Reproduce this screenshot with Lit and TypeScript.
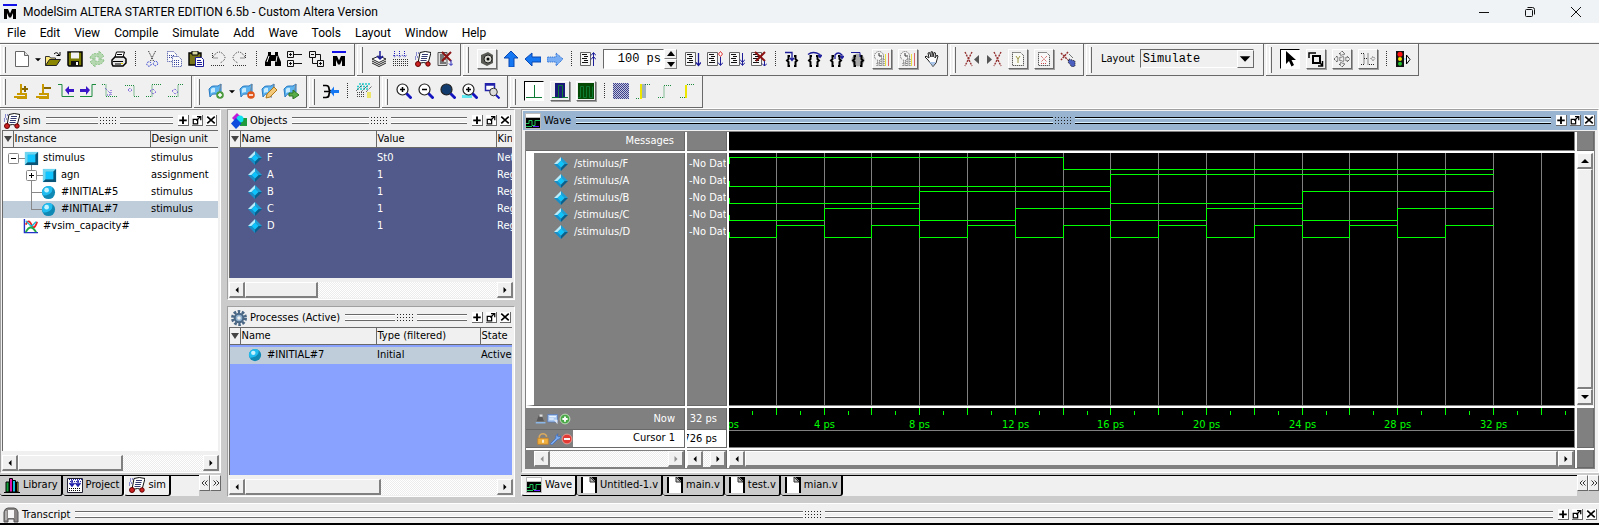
import { LitElement, html, svg, css, nothing } from "lit";
import { customElement, property } from "lit/decorators.js";
import { classMap } from "lit/directives/class-map.js";

/* ---------- icon artwork, drawn on a 16 x 16 grid ---------- */

const cube = svg`<path d="M1 1h14v14H1z" fill="#1f9cc6"/><path d="M1 1h14l-3 3H4v8l-3 3z" fill="#6fd6f2"/><path d="M15 1v14H1l3-3h8V4z" fill="#0a5478"/><path d="M4 4h8v8H4z" fill="#0fc4ff"/>`;
const diamond = svg`<path d="M8 0L0 8h4l4-4z" fill="#b6ecfb"/><path d="M8 0l8 8h-4L8 4z" fill="#1d9fd6"/><path d="M0 8l8 8v-4L4 8z" fill="#168fc9"/><path d="M16 8l-8 8v-4l4-4z" fill="#06618f"/><path d="M8 4l4 4-4 4-4-4z" fill="#0cc4fb"/>`;
const sphere = svg`<circle cx="8" cy="8" r="7" fill="#1089b4"/><path d="M1 8a7 7 0 0 1 11-5.500q1 5-3 7T2 11z" fill="#22bdf0"/><circle cx="6" cy="5.500" r="2.500" fill="#c4f3ff"/>`;
const flag = svg`<path d="M1 6q3-4 6-3t6-2v8q-3 3-6 2t-5 3z" fill="#5cb5f0" stroke="#2878c0"/><path d="M3 6q2-2 4-1v4q-2 0-4 1z" fill="#c8ecff"/><path d="M13 1l-3 14" stroke="#7a8794"/>`;
const lens = (fill: string) => svg`<circle cx="6.500" cy="6.500" r="5.500" fill="${fill}" stroke="#222" stroke-width="1.200"/><path d="M10.500 10.500l5 5" stroke="#1515c0" stroke-width="2.800"/>`;
const lines = svg`<path d="M.5 1.500h10v13H.5z" fill="#f6f6f6" stroke="#666"/><path d="M2 3.500h5M4 5.500h4M2 7.500h5M4 9.500h4M2 11.500h6" stroke="#111" stroke-width="1.200"/>`;
const braces = svg`<path d="M6 5H4.500v3L3 9.500 4.500 11v4H6M10 5h1.500v3L13 9.500 11.500 11v4H10" fill="none" stroke="#000" stroke-width="2"/>`;
const simBook = svg`<path d="M5 1.500q5-2 11 0l-3 11q-4-2-10 0z" fill="#fff" stroke="#111"/><path d="M7 3.500h6M6.500 5.500h6M6 7.500h6M5.500 9.500h6" stroke="#333a70"/><path d="M1 2h3M1 4h2M0 6h3M0 8h2" stroke="#22a" stroke-dasharray="1 1"/><circle cx="3" cy="13" r="2.500" fill="#c22" stroke="#600"/><circle cx="13" cy="13" r="2.200" fill="#c22" stroke="#600"/>`;

const art: Record<string, unknown> = {
  cube, diamond, sphere,
  mlogo: svg`<path d="M1 0h14v2H1z" fill="#1212e8"/><path d="M2 5h4l2 4.500L10 5h4v10h-3V9l-2 4.500H7L5 9v6H2z" fill="#000"/>`,
  page: svg`<path d="M1.500.5h9l4 4v11h-13z" fill="#fff" stroke="#666"/><path d="M10.500.5v4h4" fill="#ddd" stroke="#666"/>`,
  drop: svg`<path d="M4 7h8l-4 4z"/>`,
  open: svg`<path d="M.5 14.500v-9h4l1 1.500h5v2" fill="#ffe97a" stroke="#333"/><path d="M.5 14.500l4-6h11l-4 6z" fill="#8b8700" stroke="#222"/><path d="M9 3q3-3 5 1M15 1v3.500h-3.500" fill="none" stroke="#000"/>`,
  save: svg`<path d="M1 1h14v14H2l-1-1z" fill="#7b7b00" stroke="#000" stroke-width="1.500"/><path d="M4 1.500h8v6H4z" fill="#f2f2f2"/><path d="M4 10h8v5H4z" fill="#111"/><path d="M9 11h2v3H9z" fill="#fff"/>`,
  refresh: svg`<path d="M1 7q2-6 9-4V0l5 5-5 4V6Q5 5 4 8zM15 9q-2 6-9 4v3l-5-5 5-4v3q5 1 6-2z" fill="#b5d8b0" stroke="#8cc287" stroke-dasharray="2 1"/>`,
  print: svg`<path d="M4 6l1.500-5h8L12 6" fill="#fff" stroke="#000"/><path d="M1 9l3-3h9l2 2v4l-3 3H2l-1-2z" fill="#e6e6e6" stroke="#000" stroke-width="1.500"/><path d="M6 3.500h5M2 10.500h10M4 13h6" stroke="#000"/><path d="M10 12h2v1h-2z" fill="#e8d800"/>`,
  cut: svg`<g fill="none" stroke-dasharray="1.500 1"><path d="M4.500 0l5 10M11.500 0l-5 10" stroke="#333"/><circle cx="5" cy="13" r="2.200" stroke="#23c"/><circle cx="11.500" cy="12.500" r="2.200" stroke="#23c"/></g>`,
  copy: svg`<g fill="#fafafa" stroke="#33409c" stroke-dasharray="1 1"><path d="M1.500.5h6l3 3v7h-9z"/><path d="M6.500 5.500h6l3 3v7h-9z"/><path d="M3 4.500h5M3 6.500h3M8 9.500h5M8 11.500h6M8 13.500h6"/></g>`,
  paste: svg`<path d="M1 2h12v12H1z" fill="#77741a" stroke="#000" stroke-width="1.400"/><path d="M4 0h6v4H4z" fill="#d8d8a0" stroke="#000"/><path d="M7.500 6.500h6l2 2v7h-8z" fill="#fff" stroke="#1d1d9a"/><path d="M9 9.500h4M9 11.500h5M9 13.500h5" stroke="#1d1d9a"/>`,
  undo: svg`<g fill="none" stroke="#333" stroke-dasharray="1 1"><path d="M3 6q5-8 10-3t-3 9M2.500 2v5H8"/><path d="M1 14.500h14"/></g>`,
  redo: svg`<g fill="none" stroke="#333" stroke-dasharray="1 1"><path d="M13 6Q8-2 3 3t3 9M13.500 2v5H8"/><path d="M1 14.500h14"/></g>`,
  find: svg`<path d="M3 1h3v3h4V1h3v3l3 7v4h-6v-5H6v5H0v-4l3-7z"/><path d="M4 5L2 11M12 5l-1 6" stroke="#fff"/>`,
  treeA: svg`<g fill="none" stroke="#111"><path d="M.5.5h6v6h-6zM.5 9.500h6v6h-6zM2 3.500h3M3.500 2v3M2 12.500h3M3.500 11v3M7 3.500h8M7 12.500h8"/></g>`,
  treeB: svg`<g fill="none" stroke="#111"><path d="M.5.5h6v6h-6zM8.500 9.500h6v6h-6zM2 3.500h3M10 12.500h3M11.500 11v3M7 3.500h4.500v6M3.500 7v5.500h5"/></g>`,
  stack: svg`<path d="M1 12l7 3.500 7-3.500M1 10l7 3.500 7-3.500" fill="none" stroke="#222"/><path d="M1 8l7-3 7 3-7 3.500z" fill="#fff" stroke="#222"/><path d="M9 0v7M6 5l3 3 3-3" fill="none" stroke="#1d1d9a" stroke-width="1.500"/>`,
  compileAll: svg`<path d="M1.500 0v6M6.500 0v6M11.500 0v6M0 4l1.500 2L4 4l2.500 2L9 4l2.500 2L14 4" fill="none" stroke="#22b" stroke-dasharray="1 1"/><path d="M0 8.500h16M0 10.500h16M0 12.500h16M0 14.500h16" stroke="#333" stroke-dasharray="1 1"/>`,
  sim: simBook,
  endSim: svg`<path d="M1 1.500h9v13H1z" fill="#ddd" stroke="#555"/><path d="M3 4h6M3 6h4M3 8h6M3 10h4M3 12h6" stroke="#111"/><path d="M5 1l9 9M14 1l-9 9" stroke="#8c1414" stroke-width="2"/><path d="M14 9v5M12 12.500l2 2 2-2" fill="none" stroke="#22b"/>`,
  camera: svg`<path d="M2 4l7-3 5 3v8l-6 3-6-3z" fill="#5b5b55"/><circle cx="9" cy="8" r="4" fill="#d9d9d2" stroke="#222"/><circle cx="9" cy="8" r="1.500"/>`,
  up: svg`<path d="M8 0l7 7h-4v9H6V7H1z" fill="#1577f2" stroke="#0a48b4"/>`,
  left: svg`<path d="M0 8l7-6v4h9v5H7v4z" fill="#1577f2" stroke="#0a48b4"/>`,
  right: svg`<path d="M16 8L9 2v4H0v5h9v4z" fill="#79aef5" stroke="#1b60c8" stroke-dasharray="1 1"/>`,
  restart: svg`${lines}<path d="M13.500 15V2M11 4.500l2.500-3L16 4.500M11 8.500l2.500-3L16 8.500" fill="none" stroke="#1d1d9a"/>`,
  run: svg`${lines}<path d="M13.500 2v12M11 11.500l2.500 3 2.500-3" fill="none" stroke="#1d1d9a" stroke-width="1.300"/>`,
  runCont: svg`${lines}<path d="M13.500 6v8M11 11.500l2.500 3 2.500-3" fill="none" stroke="#1d1d9a"/><path d="M13.500.5L15.500 3l-2 2.500-2-2.500z" fill="#fff" stroke="#d33"/>`,
  runAll: svg`${lines}<path d="M13.500 2v12M11 8.500l2.500 3 2.500-3M11 11.500l2.500 3 2.500-3" fill="none" stroke="#1d1d9a"/>`,
  stop: svg`${lines}<path d="M4 1l10 9M14 1L5 10" stroke="#8c1414" stroke-width="2"/><path d="M13.500 10v5M11 12.500l2.500 2.500 2.500-2.500" fill="none" stroke="#1d1d9a"/>`,
  stepIn: svg`${braces}<path d="M1 1.500h7V9M6 7l2 2.500L10 7" fill="none" stroke="#1d1d9a" stroke-width="1.300"/>`,
  stepOver: svg`${braces}<path d="M2 3.500q5-4 12 0V6M12 4l2 2.500L16 4" fill="none" stroke="#1d1d9a" stroke-width="1.300"/>`,
  stepOut: svg`${braces}<path d="M7 8V4q3-4 7 0v3M12 5l2 2.500L16 5" fill="none" stroke="#1d1d9a" stroke-width="1.300"/>`,
  stepGear: svg`<circle cx="8" cy="9" r="6.500" fill="#a9a9a9"/>${braces}<path d="M1 1.500h9V6" fill="none" stroke="#1d1d9a"/>`,
  profile: svg`<circle cx="5" cy="5" r="4.500" fill="#f5f5f5" stroke="#555" stroke-dasharray="1 1"/><path d="M5 2v3h3" fill="none" stroke="#333"/><path d="M3 15v-4h3v4M7 15V7h3v8" fill="#c8c8c8" stroke="#666" stroke-dasharray="1 1"/><path d="M11 15V3h1v12z" fill="#e8de40"/><path d="M14 15V2h1v13z" fill="#d66"/>`,
  hand: svg`<path d="M4 9L1 6l1-1 3 2-1-5 1.500-.5L7 6V.8h1.500L9 6l1-4.500 1.500.5L11 7l2-3 1 1-2 7-3 3.500z" fill="#fff" stroke="#222"/><path d="M5 11l4 4 3-4z" fill="#a8c4e8"/>`,
  xleft: svg`<path d="M1 1l7 14M8 1L1 15" stroke="#943030" stroke-width="1.400" stroke-dasharray="2 1"/><path d="M15 4v9l-5-4.500z" fill="#555"/>`,
  xright: svg`<path d="M8 1l7 14M15 1L8 15" stroke="#943030" stroke-width="1.400" stroke-dasharray="2 1"/><path d="M1 4v9l5-4.500z" fill="#555"/>`,
  pageA: svg`<path d="M2.500 1.500h8l3 3v10h-11z" fill="#f8f8f4" stroke="#222" stroke-dasharray="1 1"/><path d="M6 5l2 3 2-3M8 8v4" fill="none" stroke="#9a9440"/>`,
  pageB: svg`<path d="M2.500 1.500h8l3 3v10h-11z" fill="#f8f8f8" stroke="#222" stroke-dasharray="1 1"/><path d="M5 5l6 6M11 5l-6 6M5 12.500h6" stroke="#c44" stroke-dasharray="1 1"/>`,
  xpen: svg`<path d="M1 2l7 7M8 1L1 9" stroke="#943030" stroke-width="1.500" stroke-dasharray="2 1"/><path d="M9 3l4 4" stroke="#777"/><path d="M9 8l6 2v5l-3 1-4-5z" fill="#4b5fc0" stroke="#222" stroke-dasharray="1 1"/>`,
  select: svg`<path d="M4 0v13l3-3 2.500 5.500 2.500-1.500-2.500-5H14z"/>`,
  zoomMode: svg`<path d="M5 5h7v7H5z" fill="none" stroke="#000" stroke-width="2"/><path d="M1 7V2h7M10 15h4.500v-5M11 11l4 4" fill="none" stroke="#000" stroke-width="1.500"/>`,
  pan: svg`<path d="M8 0l3 3H9v4h4V5l3 3-3 3V9H9v4h2l-3 3-3-3h2V9H3v2L0 8l3-3v2h4V3H5z" fill="#eee" stroke="#222" stroke-dasharray="1 1"/>`,
  twoC: svg`<path d="M1 2.500h3v11H1M8 2.500v11h6M4 7.500h3M11 7.500l2-2 2 2-2 2z" fill="none" stroke="#222" stroke-dasharray="1 1"/>`,
  traffic: svg`<path d="M1 0h8v16H1z" fill="#111"/><circle cx="5" cy="3.300" r="2.500" fill="#f11"/><circle cx="5" cy="8" r="2" fill="#f3e500"/><circle cx="5" cy="12.700" r="2" fill="#1fbf2f"/><path d="M11.500 4v9l3.500-4.500z" fill="#fff" stroke="#000"/><path d="M9 8h2" stroke="#6cf"/>`,
  curAdd: svg`<path d="M7 1v10M3 11h9v3H1v-1M3 15h10" fill="none" stroke="#c99a00" stroke-width="2"/><path d="M8 6h6M11 3v6" stroke="#8a6a00" stroke-width="2"/>`,
  curDel: svg`<path d="M7 1v10M3 11h9v3H1v-1M3 15h10" fill="none" stroke="#c99a00" stroke-width="2"/><path d="M8 5h7" stroke="#8a6a00" stroke-width="2"/>`,
  prevEdge: svg`<path d="M0 1.500h4v12h12" fill="none" stroke="#1b8a3c"/><path d="M7 7l4-4v3h5v3h-5v3z" fill="#3a16c8"/>`,
  nextEdge: svg`<path d="M0 13.500h12v-12h4" fill="none" stroke="#1b8a3c"/><path d="M10 7L6 3v3H0v3h6v3z" fill="#3a16c8"/>`,
  edgeA: svg`<path d="M0 1.500h4v12h12" fill="none" stroke="#1b8a3c" stroke-dasharray="1 1"/><path d="M3 5l6 6M9 7v5H5" fill="none" stroke="#5a3ad0" stroke-dasharray="1 1"/>`,
  edgeB: svg`<path d="M1 2.500h9v11h6" fill="none" stroke="#1b8a3c" stroke-dasharray="1 1"/><path d="M4 7l2-2 2 2-2 2z" fill="none" stroke="#5a3ad0" stroke-dasharray="1 1"/>`,
  edgeC: svg`<path d="M0 13.500h6v-12h9" fill="none" stroke="#1b8a3c" stroke-dasharray="1 1"/><path d="M4 8l3-2 3 3-3 2z" fill="none" stroke="#5a3ad0" stroke-dasharray="1 1"/>`,
  edgeD: svg`<path d="M0 13.500h10v-12h5" fill="none" stroke="#1b8a3c" stroke-dasharray="1 1"/><path d="M4 8l3-2 3 3-3 2z" fill="none" stroke="#5a3ad0" stroke-dasharray="1 1"/>`,
  flagAdd: svg`${flag}<circle cx="12" cy="12" r="3.800" fill="#4c9a3e"/><path d="M10 12h4M12 10v4" stroke="#fff" stroke-width="1.500"/>`,
  flagDel: svg`${flag}<circle cx="12" cy="12" r="3.800" fill="#e0561a"/><path d="M10 12h4" stroke="#fff" stroke-width="1.500"/>`,
  flagEdit: svg`${flag}<path d="M5 15l1-4 7-7 3 3-7 7z" fill="#f3c878" stroke="#b07818"/>`,
  flagGo: svg`${flag}<path d="M6 10h4V7l6 5-6 4v-3H6z" fill="#58ad48" stroke="#2e7524"/>`,
  merge: svg`<path d="M0 2.500h3q3 0 3 3t3 3q-3 0-3 3t-3 3H0M1 8.500h6" fill="none" stroke="#000" stroke-width="1.700"/><path d="M7 8.500l4-5v3.500h5v3h-5v3.500z" fill="#1577f2"/>`,
  layers: svg`<path d="M3 1h12M1 3.500h12M1 6h12" stroke="#2cc" stroke-width="1.500" stroke-dasharray="2 1"/><path d="M0 8L7 1M5 9l7-7M10 9l6-6" fill="none" stroke="#333" stroke-dasharray="1 1"/><path d="M1 9.500h7M1 11.500h7M1 13.500h7" stroke="#444" stroke-dasharray="1 1"/><path d="M11 9h4v6h-4z" fill="#ece66a"/>`,
  zoomIn: svg`${lens("#fff")}<path d="M4 6.500h5M6.500 4v5" stroke="#000" stroke-width="1.500"/>`,
  zoomOut: svg`${lens("#fff")}<path d="M4 6.500h5" stroke="#000" stroke-width="1.500"/>`,
  zoomFull: lens("#123c6e"),
  zoomCur: svg`<path d="M0 12h10v3H0z" fill="#5fe6ee"/>${lens("#fff")}<path d="M4 6.500h5M6.500 4v5" stroke="#000" stroke-width="1.500"/>`,
  zoomSel: svg`<path d="M1.500.5h9v7h-9zM1 2h10" fill="#fff" stroke="#22a" stroke-width="1.500"/><circle cx="9.500" cy="9" r="3.800" fill="#ddd" stroke="#333"/><path d="M12 12l3.500 3.500" stroke="#1515c0" stroke-width="2"/>`,
  spike: svg`<path d="M0 14.500h17M8.500 2v12" fill="none" stroke="#0d7a33"/>`,
  pulse: svg`<path d="M3 0h10v15H3z" fill="#1a1a78"/><path d="M0 14.500h6.500V2.500h4v12H16" fill="none" stroke="#0d7a33"/>`,
  pulses: svg`<path d="M0 0h16v16H0z" fill="#044a04"/><path d="M0 14.500h2.500v-11h3v11h3v-11h3v11h3v-11" fill="none" stroke="#0d7a33"/>`,
  patA: svg`<path d="M0 0h16v16H0z" fill="#c3c5dc"/><g stroke="#3b3f8c" stroke-dasharray="1 1">${[0, 1, 2, 3, 4, 5, 6, 7, 8, 9, 10, 11, 12, 13, 14, 15].map(y => svg`<path d="M${y % 2} ${y + 0.5}h16"/>`)}</g>`,
  patB: svg`<path d="M1 15.500h4M10 1.500h5" stroke="#1b8a3c" stroke-dasharray="1 1"/><path d="M5 1h2v15H5z" fill="#ece600"/><path d="M8 1.500v14M10 1.500v14" stroke="#1d4a6a" stroke-width="1.500" stroke-dasharray="1 1"/>`,
  patC: svg`<path d="M1 14.500h6v-12h8" fill="none" stroke="#1b8a3c" stroke-dasharray="1 1"/>`,
  patD: svg`<path d="M1 14.500h6M8 1.500h7" stroke="#1b8a3c" stroke-dasharray="1 1"/><path d="M7 2v13" stroke="#ece600" stroke-width="2"/>`,
  objects: svg`<path d="M6 0l5 5-5 5-5-5z" fill="#c01ad8"/><path d="M9 5h7v8H9z" fill="#1f9a3c"/><circle cx="9" cy="6" r="3.500" fill="#0fe0f0"/><path d="M5 5l5.500 5.500L5 16l-5-5.500z" fill="#0c4bdc"/>`,
  gear: svg`<circle cx="8" cy="8" r="6.500" fill="none" stroke="#4a6785" stroke-width="3" stroke-dasharray="2.500 1.580"/><circle cx="8" cy="8" r="4.300" fill="#8fb0cf" stroke="#4a6785" stroke-width="2"/><circle cx="8" cy="8" r="1.800" fill="#f0f0f0"/>`,
  wave: svg`<path d="M0 0h16v16H0z" fill="#bbb"/><path d="M1 1h14v3H1z" fill="#fff"/><path d="M1 5h14v10H1z" fill="#000"/><path d="M1 10.500h3v-3h3v5h3v-5h5M1 13.500h6" fill="none" stroke="#1fc85a"/><path d="M8 13.500h6" stroke="#62f"/>`,
  capacity: svg`<path d="M1.500 0v14.500H16" fill="none" stroke="#23c" stroke-width="1.500"/><path d="M3 6q3-7 6 0t6-3" fill="none" stroke="#e22" stroke-width="2"/><path d="M3 2l6 6 5-5" fill="none" stroke="#1ab8d8" stroke-width="1.500"/><path d="M3 14q5-10 11 0" fill="none" stroke="#2a4" stroke-width="2"/>`,
  library: svg`<path d="M0 15.500h16" stroke="#000"/><path d="M2 5h3v10H2z" fill="#14a03c" stroke="#000"/><path d="M5.500 1.500h3V15h-3z" fill="#e013b0" stroke="#000"/><path d="M8.500 3.500h3V15h-3z" fill="#1bd" stroke="#000"/><path d="M12.500 5h1.500v10h-1.500z" fill="#ec3" stroke="#000"/>`,
  project: svg`<path d="M.5 1.500h15v14H.5z" fill="#fff" stroke="#223"/><path d="M2 2.500h13M3 4.500h12" stroke="#22a" stroke-dasharray="1 1"/><path d="M5 3v5M11 3v5M2.500 6L5 9l2.500-3M8.500 6l2.500 3 2.500-3" fill="none" stroke="#22a" stroke-width="1.500"/><path d="M2 11.500h12M2 13.500h12" stroke="#000" stroke-dasharray="1 1"/>`,
  doc: svg`<path d="M0 0h16v16H0z" fill="#000"/><path d="M2 0h8l4 4v12H2z" fill="#fff"/><path d="M9 0v5h5z" fill="#bbb" stroke="#333"/>`,
  transcript: svg`<path d="M1 15V5q1-4 4-4h6q3 0 4 4v10h-4v-3H5v3z" fill="#8a8585" stroke="#555"/><path d="M5 3h6v8H5z" fill="#f6f6f6"/><path d="M3 4v9" stroke="#d8d8d8"/>`,
  nowA: svg`<path d="M2 11l3-8h4l3 8z" fill="#5a5a5a"/><path d="M6 2h4v3H6z" fill="#ddd"/><path d="M1 13h13" stroke="#8ab6e8" stroke-width="2"/>`,
  nowB: svg`<path d="M1 2h13v10H1z" fill="#a8c8f0" stroke="#5578b8"/><path d="M3 5h9M3 8h6" stroke="#fff" stroke-width="1.500"/><path d="M9 9h5v6z" fill="#dfe8f4"/>`,
  nowC: svg`<circle cx="8" cy="8" r="6.500" fill="#4aa848" stroke="#d8f0d0"/><path d="M4.500 8h7M8 4.500v7" stroke="#fff" stroke-width="2.500"/>`,
  lock: svg`<path d="M3 8V5q1-4 5-4t5 4" fill="none" stroke="#d8a860" stroke-width="2"/><path d="M1 7h14v8H1z" fill="#f0b040" stroke="#c88020"/><path d="M7 9h2v4H7z" fill="#fff"/>`,
  wrench: svg`<path d="M2 14l7-7q-1-4 3-6l-1 3 2 1 3-1q0 4-5 5l-6 6q-2 2-3-1z" fill="#7eaef0" stroke="#3c68b8"/>`,
  minusRed: svg`<circle cx="8" cy="8" r="6.500" fill="#e23a34" stroke="#f4b0a8"/><path d="M4 8h8" stroke="#fff" stroke-width="2.500"/>`,
  plus: svg`<path d="M2 7h12v3H2zM6.500 2.500h3v12h-3z"/>`,
  undock: svg`<path d="M2 7h7v7H2z" fill="none" stroke="#000" stroke-width="2"/><path d="M7 9l6-6M8 2.500h6v6" fill="none" stroke="#000" stroke-width="2"/>`,
  close: svg`<path d="M2 2.500l12 11M14 2.500l-12 11" stroke="#000" stroke-width="2.500"/>`,
};

const icon = (name: string, cls = "i16") =>
  svg`<svg class="${cls}" viewBox="0 0 16 16" aria-hidden="true">${art[name]}</svg>`;

const shared = css`
  *, *::before, *::after { box-sizing: border-box; }
  button, input, select {
    font: inherit; color: inherit; margin: 0; padding: 0; border: 0;
    border-radius: 0; background: none; appearance: none; outline-offset: -2px;
  }
  button { display: flex; align-items: center; justify-content: center; flex: none; }
  svg { display: block; flex: none; }
  .i16 { width: 16px; height: 16px; }
  .i14 { width: 14px; height: 14px; }
  .i12 { width: 12px; height: 12px; }
  .i10 { width: 10px; height: 10px; }
  .i8 { width: 8px; height: 8px; }
`;

/* ---------- title strip of a docked pane ---------- */
@customElement("dock-title")
export class DockTitle extends LitElement {
  @property() label = "";
  @property() icon = "";
  @property({ type: Boolean, reflect: true }) active = false;

  static styles = [shared, css`
    :host { display: flex; align-items: center; height: 19px; padding: 0 2px; gap: 3px; flex: none; }
    :host([active]) { background: #99b4d1; }
    .name { white-space: nowrap; }
    .grip { flex: 1; display: flex; align-items: center; gap: 2px; min-width: 0; margin: 0 2px; }
    .rule { flex: 1; height: 7px; border: solid #696969; border-width: 1px 0; background: linear-gradient(#fff 0 1px, #f0f0f0 1px 4px, #fff 4px); }
    :host([active]) .rule { border-color: #000; background: linear-gradient(#d7f0ff 0 1px, #99b4d1 1px 4px, #d7f0ff 4px); }
    .dots { width: 18px; height: 7px; background: conic-gradient(from -90deg at 1px 1px, #222 0 25%, transparent 0) 0 0 / 3px 3px; }
    .tools { display: flex; gap: 3px; }
    .tools button { width: 11px; height: 11px; background: #fff; border: solid #696969; border-width: 0 1px 1px 0; }
  `];

  render() {
    return html`
      ${icon(this.icon)}
      <span class="name">${this.label}</span>
      <div class="grip"><span class="rule"></span><span class="dots"></span><span class="rule"></span></div>
      <div class="tools">
        <button aria-label="Maximize ${this.label}">${icon("plus", "i10")}</button>
        <button aria-label="Undock ${this.label}">${icon("undock", "i10")}</button>
        <button aria-label="Close ${this.label}">${icon("close", "i10")}</button>
      </div>`;
  }
}

/* ---------- scroll bar; thumb given in percent of the trough ---------- */
@customElement("pane-scroll")
export class PaneScroll extends LitElement {
  @property({ type: Number }) thumb = 0;
  @property({ type: Boolean, reflect: true }) vertical = false;
  @property({ type: Boolean, reflect: true }) disabled = false;

  static styles = [shared, css`
    :host { display: flex; height: 16px; flex: none; }
    :host([vertical]) { flex-direction: column; width: 16px; height: auto; }
    button, .thumb { background: #f0f0f0; border: solid; border-color: #fff #808080 #808080 #fff; border-width: 1px 2px 2px 1px; }
    button { width: 16px; height: 16px; }
    .trough {
      flex: 1; display: flex; min-width: 0; min-height: 0;
      background: repeating-conic-gradient(#fff 0 25%, #ececec 0 50%) 0 0 / 2px 2px;
    }
    :host([vertical]) .trough { flex-direction: column; }
    .arrow { width: 8px; height: 8px; fill: #000; }
    :host([disabled]) .arrow { fill: #909090; }
  `];

  render() {
    const back = this.vertical ? "M0 6h8L4 2z" : "M5.500 1v6l-3-3z";
    const fwd = this.vertical ? "M0 2h8L4 6z" : "M2.500 1v6l3-3z";
    const size = this.vertical ? `height:${this.thumb}%` : `width:${this.thumb}%`;
    return html`
      <button aria-label="Scroll back" ?disabled=${this.disabled}><svg class="arrow" viewBox="0 0 8 8"><path d=${back}></path></svg></button>
      <div class="trough">${this.thumb ? html`<div class="thumb" style=${size}></div>` : nothing}</div>
      <button aria-label="Scroll forward" ?disabled=${this.disabled}><svg class="arrow" viewBox="0 0 8 8"><path d=${fwd}></path></svg></button>`;
  }
}

/* ---------- signal model ---------- */
interface Signal { name: string; start: number; edges: number[]; value: string; kind: string; }
const every = (step: number) => Array.from({ length: 32 / step - 1 }, (_, i) => (i + 1) * step);
const signals: Signal[] = [
  { name: "F", start: 1, edges: [14], value: "St0", kind: "Net" },
  { name: "A", start: 0, edges: [16], value: "1", kind: "Register" },
  { name: "B", start: 0, edges: every(8), value: "1", kind: "Register" },
  { name: "C", start: 0, edges: every(4), value: "1", kind: "Register" },
  { name: "D", start: 0, edges: every(2), value: "1", kind: "Register" },
];
const PX_PER_PS = 23.9;
const xAt = (ps: number) => Math.round(ps * PX_PER_PS - 1) + 0.5;

const trace = (s: Signal, row: number) => {
  const hi = row * 17 + 4.5;
  const lo = hi + 12;
  let level = s.start;
  const y = () => (level ? hi : lo);
  let d = `M.5 ${hi + 6}V${y()}`;
  for (const t of s.edges) {
    d += `H${xAt(t)}`;
    level = 1 - level;
    d += `V${y()}`;
  }
  return d + `H${xAt(32)}`;
};

type Tool = string | { id: string; cls: string };
const box = (id: string) => ({ id, cls: "box" });
const down = (id: string) => ({ id, cls: "box down" });

@customElement("app-root")
export class AppRoot extends LitElement {
  static styles = [shared, css`
    :host {
      display: flex; flex-direction: column; height: 100vh; min-height: 480px; overflow: hidden;
      background: #f0f0f0; color: #000;
      font: 11px/14px "DejaVu Sans Condensed", "DejaVu Sans", sans-serif;
    }
    .titlebar { display: flex; align-items: center; height: 23px; background: #f0f3f5; padding-left: 2px; gap: 5px; flex: none; }
    .titlebar h1 { flex: 1; margin: 0; font: 12px/18px Roboto, sans-serif; }
    .win { display: flex; }
    .win button { width: 46px; height: 22px; }
    .win svg { fill: none; stroke: #111; }
    .menu { display: flex; height: 20px; background: #fff; border-bottom: 1px solid #f0f0f0; font: 12px/18px Roboto, sans-serif; flex: none; }
    .menu button { padding: 0 7px; }

    .bars { display: flex; gap: 2px; border-top: 1px solid #696969; flex: none; }
    .bars.last { border-top: 0; border-bottom: 1px solid #fff; }
    .group {
      display: flex; align-items: center; height: 32px; padding: 0 4px 2px 11px; position: relative;
      border: solid #696969; border-width: 0 1px 1px 0; box-shadow: inset 1px 1px #fff;
    }
    .group::before { content: ""; position: absolute; left: 3px; top: 3px; bottom: 2px; width: 3px; border-left: 1px solid #fff; border-right: 1px solid #696969; }
    .tool { width: 22px; height: 22px; }
    .drop { width: 9px; height: 22px; overflow: hidden; }
    .box { width: 20px; height: 20px; margin: 0 3px; border: solid; border-width: 1px; border-color: #fff #696969 #696969 #fff; box-shadow: 1px 1px #a0a0a0; }
    .box.down { background: #fff; border-color: #000 #fff #fff #000; box-shadow: none; }
    .sep { width: 11px; height: 16px; background: repeating-linear-gradient(#333 0 1px, transparent 1px 2px) 5px 0 / 1px 16px no-repeat; }
    .mono { font: 12px/16px "Liberation Mono", monospace; }
    .time { width: 61px; height: 20px; margin-left: 4px; padding-right: 2px; text-align: right; background: #fff; border: 1px solid; border-color: #696969 #fff #fff #696969; }
    .spin { display: flex; flex-direction: column; width: 13px; height: 20px; margin-right: 5px; }
    .spin button { flex: 1; border: 1px solid; border-color: #fff #808080 #808080 #fff; }
    .layout { gap: 5px; padding-right: 9px; padding-left: 15px; }
    .layout .pick { position: relative; display: flex; width: 114px; height: 19px; }
    .layout select { width: 100%; padding-left: 2px; border: 1px solid; border-color: #696969 #fff #fff #696969; }
    .layout .pick svg { position: absolute; right: 0; top: 1px; width: 17px; height: 18px; background: #f0f0f0; border: 1px solid; border-color: #fff #696969 #696969 #fff; pointer-events: none; }

    .desk { flex: 1; min-height: 0; display: flex; gap: 6px; background: #cbcbcb; padding-bottom: 6px; }
    .stack { display: flex; flex-direction: column; min-height: 0; min-width: 0; }
    .left { width: 221px; flex: none; }
    .mid { width: 288px; flex: none; gap: 6px; }
    .right { flex: 1; }
    .pane { display: flex; flex-direction: column; flex: 1; min-height: 0; padding: 1px 1px 0; background: #f0f0f0; border: solid; border-width: 1px; border-color: #a0a0a0 #fff #fff #a0a0a0; }
    .sheet { flex: 1; min-height: 0; overflow: hidden; background: #fff; border-top: 1px solid #696969; border-left: 1px solid #696969; margin: 0 1px 4px 0; }
    .sheet.navy { background: #515a8a; color: #fff; }
    .sheet.blue { background: #8aa2ff; }
    pane-scroll { margin: 0 0 1px; }
    table { width: 100%; table-layout: fixed; border-collapse: collapse; }
    th { height: 16px; padding: 0 0 0 1px; line-height: 13px; text-align: left; font-weight: 400; background: #f0f0f0; color: #000; border: solid #696969; border-width: 0 0 1px 1px; white-space: nowrap; overflow: hidden; }
    th:first-child { border-left: 0; }
    td { height: 17px; padding: 0 0 0 1px; white-space: nowrap; overflow: hidden; }
    tbody::before { content: ""; display: block; height: 2px; }
    .first { padding: 0; }
    .cell { display: flex; align-items: center; height: 17px; }
    .cell.sig { padding-left: 18px; gap: 5px; }
    .c-mark { width: 10px; }
    .c-inst { width: 137px; }
    .c-name { width: 136px; }
    .c-val { width: 120px; }
    .c-type { width: 104px; }
    .on { background: #bfcddb; }

    .tabs { display: flex; height: 24px; padding-bottom: 1px; flex: none; }
    .tabrow { flex: 1; display: flex; background: #f0f0f0; border-top: 1px solid #000; margin-top: 2px; min-width: 0; }
    .tab { height: 20px; padding: 0 3px 1px 4px; gap: 3px; background: #cbcbcb; border: solid #000; border-width: 0 2px 1px 0; border-radius: 0 0 3px 3px; }
    .tab.sel { background: #f0f0f0; border-left: 1px solid #fff; }
    .nudge { display: flex; padding-top: 2px; }
    .nudge button { width: 11px; height: 16px; background: #f0f0f0; border: 1px solid; border-color: #fff #696969 #696969 #fff; }

    .wave {
      flex: 1; min-height: 0; display: grid; gap: 2px; margin: 1px 2px 3px; background: #fff;
      grid-template: 19px 1fr 40px 18px / 159px 40px 1fr 17px;
      border: 1px solid #808080; color: #fff;
    }
    .g { background: #808080; border: solid #696969; border-width: 0 1px 1px 0; min-width: 0; min-height: 0; overflow: hidden; }
    .k { background: #000; border: solid #808080; border-width: 0 1px 1px 0; min-width: 0; min-height: 0; overflow: hidden; }
    .msg { padding: 2px 10px 0; text-align: right; }
    .names { border-left: 8px solid #fff; padding-top: 2px; }
    .names .cell { padding-left: 20px; gap: 6px; }
    .vals { padding: 2px 0 0 2px; }
    .vals .cell { white-space: nowrap; }
    .plot { display: block; width: 100%; height: 100%; shape-rendering: crispEdges; fill: none; stroke: #0f0; }
    .plot .grid { stroke: #808080; }
    .plot .lab { fill: #0f0; stroke: none; text-anchor: middle; }
    .foot { display: grid; grid-template: 22px 17px / minmax(0, 1fr); }
    .foot .now { display: flex; align-items: center; padding: 0 9px; border-bottom: 1px solid #696969; }
    .foot .now .t { margin-left: auto; white-space: nowrap; }
    .cursor { display: flex; align-items: center; padding-left: 11px; }
    .cursor .t { flex: 1; height: 17px; padding: 1px 9px 0; text-align: right; background: #fff; color: #000; }
    .cv { display: flex; justify-content: flex-end; align-items: center; padding-right: 9px; background: #fff; color: #000; white-space: nowrap; overflow: hidden; }
    .foot .nv { padding-left: 0; }
    .hs { padding-top: 1px; border-bottom: 0; }
    .hs.pad { padding-left: 8px; }
    .vs { background: #f0f0f0; display: flex; }

    .transcript { flex: none; height: 22px; border-top: 1px solid #fff; overflow: hidden; padding: 1px 0 0 1px; border-bottom: 2px solid #000; }
  `];

  private tools(items: Tool[]) {
    return items.map(t => {
      if (t === "|") return html`<span class="sep"></span>`;
      if (t === "v") return html`<button class="drop" aria-label="More">${icon("drop", "i12")}</button>`;
      const id = typeof t === "string" ? t : t.id;
      const cls = typeof t === "string" ? "tool" : t.cls;
      return html`<button class=${cls} aria-label=${id}>${icon(id)}</button>`;
    });
  }

  private group(...items: Tool[]) {
    return html`<div class="group" role="toolbar">${this.tools(items)}</div>`;
  }

  private mark() {
    return html`<svg class="i8" viewBox="0 0 8 8"><path d="M0 1h8L4 7z" fill="#444"></path></svg>`;
  }

  private tabBar(tabs: [string, string][], selected: string) {
    return html`<div class="tabs">
      <div class="tabrow" role="tablist">
        ${tabs.map(([name, ic]) => html`<button role="tab" class=${classMap({ tab: true, sel: name === selected })}>${icon(ic)}${name}</button>`)}
      </div>
      <div class="nudge">
        <button aria-label="Previous tab"><svg class="i8" viewBox="0 0 8 8" fill="none" stroke="#333"><path d="M3.500 1.500L1 4l2.500 2.500M6.500 1.500L4 4l2.500 2.500"></path></svg></button>
        <button aria-label="Next tab"><svg class="i8" viewBox="0 0 8 8" fill="none" stroke="#333"><path d="M1.500 1.500L4 4 1.500 6.500M4.500 1.500L7 4 4.500 6.500"></path></svg></button>
      </div>
    </div>`;
  }

  /* expander box, connector lines and node symbol of one tree row */
  private branch(kind: "root" | "open" | "leaf" | "last" | "cap") {
    const pm = (x: number, plus: boolean) => svg`<rect x="${x + 0.5}" y="3.500" width="10" height="10" rx="1" fill="#fff" stroke="#888"/><path d="M${x + 3} 8.500h5${plus ? `M${x + 5.5} 6v5` : ""}" stroke="#000"/>`;
    const at = (x: number, a: unknown) => svg`<svg x="${x}" y="1" width="15" height="15" viewBox="0 0 16 16">${a}</svg>`;
    const body = {
      root: svg`<path d="M16 8.500h6M28.500 13v4" stroke="#888"/>${pm(5, false)}${at(21, cube)}`,
      open: svg`<path d="M28.500 0v17M34 8.500h6" stroke="#888"/>${pm(23, true)}${at(39, cube)}`,
      leaf: svg`<path d="M28.500 0v17M28 8.500h11" stroke="#888"/>${at(38, sphere)}`,
      last: svg`<path d="M28.500 0v9M28 8.500h11" stroke="#888"/>${at(38, sphere)}`,
      cap: svg`${at(20, art.capacity)}`,
    }[kind];
    const w = kind === "root" || kind === "cap" ? 40 : 58;
    return html`<svg width=${w} height="17">${body}</svg>`;
  }

  private simPane() {
    const rows: ["root" | "open" | "leaf" | "last" | "cap", string, string][] = [
      ["root", "stimulus", "stimulus"],
      ["open", "agn", "assignment"],
      ["leaf", "#INITIAL#5", "stimulus"],
      ["last", "#INITIAL#7", "stimulus"],
      ["cap", "#vsim_capacity#", ""],
    ];
    return html`<section class="pane">
      <dock-title label="sim" icon="sim"></dock-title>
      <div class="sheet"><table>
        <colgroup><col class="c-mark"><col class="c-inst"><col></colgroup>
        <thead><tr><th>${this.mark()}</th><th>Instance</th><th>Design unit</th></tr></thead>
        <tbody>${rows.map(([k, a, b]) => html`<tr class=${k === "last" ? "on" : ""}>
          <td colspan="2" class="first"><div class="cell">${this.branch(k)}${a}</div></td><td>${b}</td></tr>`)}</tbody>
      </table></div>
      <pane-scroll thumb="57"></pane-scroll>
    </section>`;
  }

  private objectsPane() {
    return html`<section class="pane">
      <dock-title label="Objects" icon="objects"></dock-title>
      <div class="sheet navy"><table>
        <colgroup><col class="c-mark"><col class="c-name"><col class="c-val"><col></colgroup>
        <thead><tr><th>${this.mark()}</th><th>Name</th><th>Value</th><th>Kind</th></tr></thead>
        <tbody>${signals.map(s => html`<tr><td colspan="2" class="first"><div class="cell sig">${icon("diamond", "i14")}${s.name}</div></td><td>${s.value}</td><td>${s.kind}</td></tr>`)}</tbody>
      </table></div>
      <pane-scroll thumb="29"></pane-scroll>
    </section>`;
  }

  private processPane() {
    return html`<section class="pane">
      <dock-title label="Processes (Active)" icon="gear"></dock-title>
      <div class="sheet blue"><table>
        <colgroup><col class="c-mark"><col class="c-name"><col class="c-type"><col></colgroup>
        <thead><tr><th>${this.mark()}</th><th>Name</th><th>Type (filtered)</th><th>State</th></tr></thead>
        <tbody><tr class="on"><td colspan="2" class="first"><div class="cell sig">${icon("sphere", "i14")}#INITIAL#7</div></td><td>Initial</td><td>Active</td></tr></tbody>
      </table></div>
      <pane-scroll thumb="54"></pane-scroll>
    </section>`;
  }

  private wavePane() {
    const gridPs = Array.from({ length: 60 }, (_, i) => (i + 1) * 2);
    const ticks = Array.from({ length: 120 }, (_, i) => i + 1);
    const labels = [0, 4, 8, 12, 16, 20, 24, 28, 32];
    return html`<section class="pane">
      <dock-title active label="Wave" icon="wave"></dock-title>
      <div class="wave">
        <div class="g msg">Messages</div>
        <div class="g"></div>
        <div class="k"></div>
        <div class="g"></div>

        <div class="g names">${signals.map(s => html`<div class="cell">${icon("diamond", "i14")}/stimulus/${s.name}</div>`)}</div>
        <div class="g vals">${signals.map(() => html`<div class="cell">-No Data-</div>`)}</div>
        <div class="k"><svg class="plot">
          ${gridPs.map(t => svg`<path class="grid" d="M${xAt(t)} 0v2000"/>`)}
          ${signals.map((s, i) => svg`<path d="${trace(s, i)}"/>`)}
        </svg></div>
        <div class="vs"><pane-scroll vertical thumb="100"></pane-scroll></div>

        <div class="g foot">
          <div class="now">${icon("nowA", "i12")}${icon("nowB", "i12")}${icon("nowC", "i12")}<span class="t">Now</span></div>
          <div class="cursor">${icon("lock", "i12")}${icon("wrench", "i12")}${icon("minusRed", "i12")}<span class="t">Cursor 1</span></div>
        </div>
        <div class="g foot">
          <div class="now nv"><span class="t">32 ps</span></div>
          <div class="cv">726 ps</div>
        </div>
        <div class="k"><svg class="plot">
          <path class="grid" d="M0 22.500h4000"></path>
          ${ticks.map(t => svg`<path d="M${xAt(t)} ${t % 2 ? 3 : 0}V7"/>`)}
          ${labels.map(t => svg`<text class="lab" x="${xAt(t)}" y="20">${t} ps</text>`)}
        </svg></div>
        <div class="g"></div>

        <div class="g hs pad"><pane-scroll disabled></pane-scroll></div>
        <div class="g hs"><pane-scroll></pane-scroll></div>
        <div class="g hs"><pane-scroll thumb="100"></pane-scroll></div>
        <div class="g"></div>
      </div>
    </section>`;
  }

  render() {
    const menus = ["File", "Edit", "View", "Compile", "Simulate", "Add", "Wave", "Tools", "Layout", "Window", "Help"];
    return html`
      <header class="titlebar">
        ${icon("mlogo", "i16")}
        <h1>ModelSim ALTERA STARTER EDITION 6.5b - Custom Altera Version</h1>
        <div class="win">
          <button aria-label="Minimize"><svg width="10" height="10"><path d="M0 5.500h10"></path></svg></button>
          <button aria-label="Restore"><svg width="10" height="10"><rect x=".5" y="2.500" width="7" height="7" rx="1"></rect><path d="M2.500.5h5q2 0 2 2v5"></path></svg></button>
          <button aria-label="Close"><svg width="10" height="10"><path d="M0 0l10 10M10 0L0 10"></path></svg></button>
        </div>
      </header>
      <nav class="menu">${menus.map(m => html`<button>${m}</button>`)}</nav>

      <div class="bars">
        ${this.group("page", "v", "open", "save", "refresh", "print", "|", "cut", "copy", "paste", "undo", "redo", "|", "find", "treeA", "treeB", "mlogo")}
        ${this.group("stack", "compileAll", "sim", "endSim")}
        <div class="group" role="toolbar">
          ${this.tools([box("camera"), "up", "left", "right", "|", "restart"])}
          <input class="time mono" aria-label="Run length" value="100 ps">
          <div class="spin">
            <button aria-label="Increase"><svg class="i8" viewBox="0 0 8 8"><path d="M0 6h8L4 1z"></path></svg></button>
            <button aria-label="Decrease"><svg class="i8" viewBox="0 0 8 8"><path d="M0 2h8L4 7z"></path></svg></button>
          </div>
          ${this.tools(["run", "runCont", "runAll", "stop", "|", "stepIn", "stepOver", "stepOut", "stepGear", box("profile"), box("profile"), "hand"])}
        </div>
        ${this.group("xleft", "xright", box("pageA"), box("pageB"), "xpen")}
        <div class="group layout">
          <label for="layout">Layout</label>
          <span class="pick">
            <select id="layout" class="mono"><option>Simulate</option></select>
            <svg viewBox="0 0 17 18"><path d="M2 6h12l-6 6z"></path></svg>
          </span>
        </div>
        ${this.group(down("select"), box("zoomMode"), box("pan"), box("twoC"), "|", "traffic")}
      </div>
      <div class="bars last">
        ${this.group("curAdd", "curDel", "prevEdge", "nextEdge", "edgeA", "edgeB", "edgeC", "edgeD")}
        ${this.group("flagAdd", "v", "flagDel", "flagEdit", "flagGo")}
        ${this.group("merge", "|", "layers")}
        ${this.group("zoomIn", "zoomOut", "zoomFull", "zoomCur", "zoomSel")}
        ${this.group(down("spike"), box("pulse"), box("pulses"), "|", "patA", "patB", "patC", "patD")}
      </div>

      <main class="desk">
        <div class="stack left">
          ${this.simPane()}
          ${this.tabBar([["Library", "library"], ["Project", "project"], ["sim", "sim"]], "sim")}
        </div>
        <div class="stack mid">${this.objectsPane()}${this.processPane()}</div>
        <div class="stack right">
          ${this.wavePane()}
          ${this.tabBar([["Wave", "wave"], ["Untitled-1.v", "doc"], ["main.v", "doc"], ["test.v", "doc"], ["mian.v", "doc"]], "Wave")}
        </div>
      </main>
      <section class="transcript"><dock-title label="Transcript" icon="transcript"></dock-title></section>
    `;
  }
}
